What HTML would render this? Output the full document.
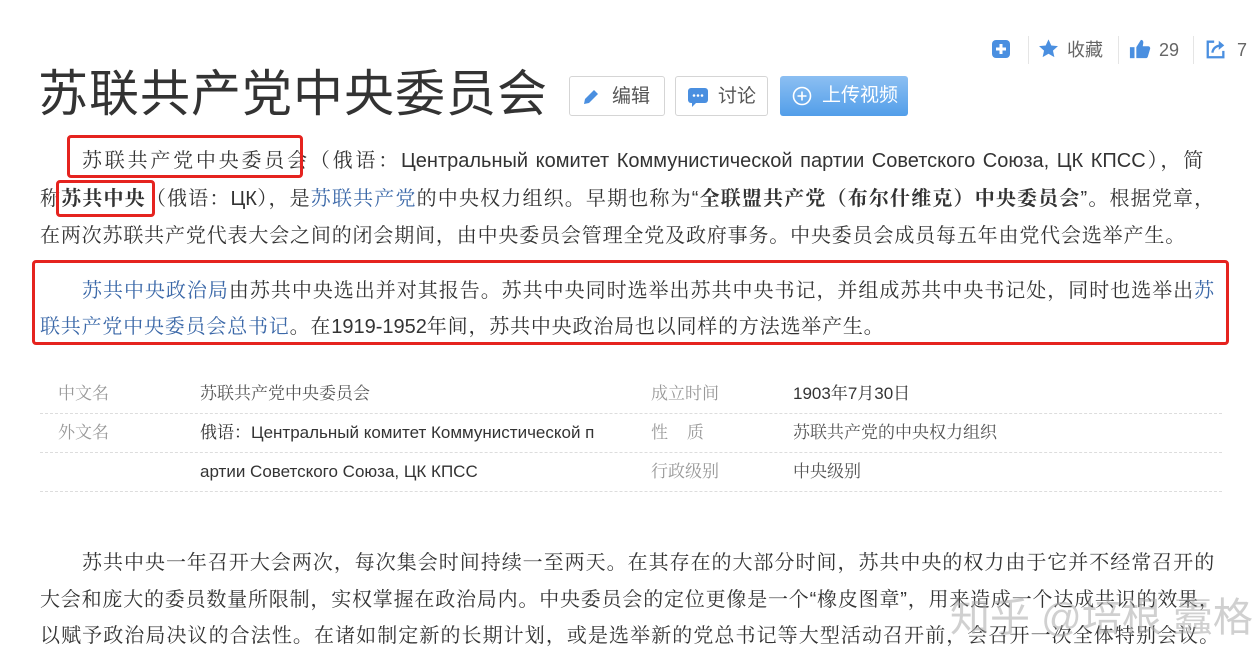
<!DOCTYPE html>
<html><head><meta charset="utf-8"><style>
body{margin:0;width:1257px;height:666px;background:#fff;position:relative;overflow:hidden;font-family:"Liberation Sans","Noto Serif CJK SC",serif;color:#333}
.a{position:absolute;white-space:nowrap}
.ln{position:absolute;font-size:20px;letter-spacing:0.8px;line-height:24px;text-align:justify;text-align-last:justify;white-space:nowrap;font-family:"Liberation Sans","Noto Serif CJK SC","Noto Serif CJK JP",serif;color:#333}
.ru{letter-spacing:0}
.lk{color:#3b68a8}
.btn{position:absolute;top:76px;height:40px;border:1px solid #d5d5d5;border-radius:3px;background:#fff;font-family:"Liberation Sans","Noto Sans CJK SC",sans-serif;font-size:19px;color:#555;line-height:40px;box-sizing:border-box}
.red{position:absolute;border:3px solid #e5231f;border-radius:4px}
.lab{position:absolute;font-size:17px;color:#999;font-family:"Liberation Sans","Noto Serif CJK SC",serif;line-height:22px}
.val{position:absolute;font-size:17px;color:#333;line-height:22px;white-space:nowrap}
.dot{position:absolute;left:40px;width:1182px;border-top:1px dashed #ddd}
.sep{position:absolute;top:36px;width:1px;height:28px;background:#e5e5e5}
.tr{position:absolute;font-family:"Liberation Sans","Noto Sans CJK SC",sans-serif;font-size:18px;color:#666;top:38px;line-height:24px}
</style></head><body>

<svg class="a" style="left:991px;top:39px" width="20" height="20" viewBox="0 0 20 20"><rect x="1" y="1" width="18" height="18" rx="4" fill="#4a8fe0"/><path d="M10 5v10M5 10h10" stroke="#fff" stroke-width="3"/></svg>
<div class="sep" style="left:1028px"></div>
<svg class="a" style="left:1038px;top:38px" width="21" height="21" viewBox="0 0 24 24"><path d="M12 1.5l3.2 7 7.6.8-5.7 5.1 1.6 7.5L12 18l-6.7 3.9 1.6-7.5L1.2 9.3l7.6-.8z" fill="#4a8fe0"/></svg>
<div class="tr" style="left:1067px">收藏</div>
<div class="sep" style="left:1118px"></div>
<svg class="a" style="left:1129px;top:38px" width="22" height="22" viewBox="0 0 24 24"><rect x="1" y="10" width="5" height="12" fill="#4a8fe0"/><path d="M8 10l5-8c2 0 3 1.5 2.5 4L15 9h6c1.5 0 2.5 1.5 2 3l-2.5 8.5c-.4 1.2-1.2 1.5-2.5 1.5H8z" fill="#4a8fe0"/></svg>
<div class="tr" style="left:1159px">29</div>
<div class="sep" style="left:1193px"></div>
<svg class="a" style="left:1205px;top:38px" width="22" height="22" viewBox="0 0 24 24"><path d="M10 4H3v17h17v-7" fill="none" stroke="#4a8fe0" stroke-width="2.5"/><path d="M8 16c1-6 5-8 11-8" fill="none" stroke="#4a8fe0" stroke-width="2.5"/><path d="M15 3l6 5-6 5z" fill="#4a8fe0"/></svg>
<div class="tr" style="left:1237px">7</div>

<div class="a" style="left:38px;top:62px;font-size:50px;line-height:64px;color:#333;font-family:'Liberation Sans','Noto Sans CJK SC',sans-serif;letter-spacing:1px">苏联共产党中央委员会</div>
<div class="btn" style="left:569px;width:96px"><svg class="a" style="left:12px;top:11px" width="18" height="18" viewBox="0 0 18 18"><path d="M2 16l1-5 9-9 4 4-9 9z" fill="#4a8fe0"/></svg><span class="a" style="left:42px">编辑</span></div>
<div class="btn" style="left:675px;width:93px"><svg class="a" style="left:12px;top:11px" width="20" height="19" viewBox="0 0 20 19"><rect x="0" y="0" width="20" height="15" rx="3" fill="#4a8fe0"/><path d="M4 14v5l5-5z" fill="#4a8fe0"/><circle cx="6" cy="7.5" r="1.3" fill="#fff"/><circle cx="10" cy="7.5" r="1.3" fill="#fff"/><circle cx="14" cy="7.5" r="1.3" fill="#fff"/></svg><span class="a" style="left:42px">讨论</span></div>
<div class="btn" style="left:780px;width:128px;border:none;background:linear-gradient(#8cbff2,#529ee9);color:#fff"><svg class="a" style="left:12px;top:10px" width="20" height="20" viewBox="0 0 20 20"><circle cx="10" cy="10" r="8.5" fill="none" stroke="#fff" stroke-width="1.6"/><path d="M10 5.5v9M5.5 10h9" stroke="#fff" stroke-width="1.6"/></svg><span class="a" style="left:42px">上传视频</span></div>

<div class="ln" style="left:82px;top:149px;width:1122px">苏联共产党中央委员会（俄语：<span class="ru">Центральный комитет Коммунистической партии Советского Союза, ЦК КПСС</span>），简</div>
<div class="ln" style="left:40px;top:187px;width:1175px">称<b>苏共中央</b>（俄语：<span class="ru">ЦК</span>），是<span class="lk">苏联共产党</span>的中央权力组织。早期也称为“<b>全联盟共产党（布尔什维克）中央委员会</b>”。根据党章，</div>
<div class="ln" style="left:40px;top:224px;width:1146px">在两次苏联共产党代表大会之间的闭会期间，由中央委员会管理全党及政府事务。中央委员会成员每五年由党代会选举产生。</div>
<div class="red" style="left:67px;top:135px;width:230px;height:37px"></div>
<div class="red" style="left:56px;top:180px;width:93px;height:31px"></div>

<div class="ln" style="left:82px;top:279px;width:1133px"><span class="lk">苏共中央政治局</span>由苏共中央选出并对其报告。苏共中央同时选举出苏共中央书记，并组成苏共中央书记处，同时也选举出<span class="lk">苏</span></div>
<div class="ln" style="left:40px;top:315px;text-align-last:left"><span class="lk">联共产党中央委员会总书记</span>。在<span class="ru">1919-1952</span>年间，苏共中央政治局也以同样的方法选举产生。</div>
<div class="red" style="left:32px;top:260px;width:1191px;height:79px"></div>

<div class="lab" style="left:58px;top:383px">中文名</div>
<div class="val" style="left:200px;top:383px;color:#555">苏联共产党中央委员会</div>
<div class="lab" style="left:651px;top:383px">成立时间</div>
<div class="val" style="left:793px;top:383px">1903年7月30日</div>
<div class="dot" style="top:413px"></div>
<div class="lab" style="left:58px;top:422px">外文名</div>
<div class="val" style="left:200px;top:422px">俄语：Центральный комитет Коммунистической п</div>
<div class="lab" style="left:651px;top:422px">性&nbsp;&nbsp;&nbsp;&nbsp;质</div>
<div class="val" style="left:793px;top:422px;color:#555">苏联共产党的中央权力组织</div>
<div class="dot" style="top:452px"></div>
<div class="val" style="left:200px;top:461px">артии Советского Союза, ЦК КПСС</div>
<div class="lab" style="left:651px;top:461px">行政级别</div>
<div class="val" style="left:793px;top:461px;color:#555">中央级别</div>
<div class="dot" style="top:491px"></div>

<div class="ln" style="left:82px;top:551px;width:1133px">苏共中央一年召开大会两次，每次集会时间持续一至两天。在其存在的大部分时间，苏共中央的权力由于它并不经常召开的</div>
<div class="ln" style="left:40px;top:588px;width:1175px">大会和庞大的委员数量所限制，实权掌握在政治局内。中央委员会的定位更像是一个“橡皮图章”，用来造成一个达成共识的效果，</div>
<div class="ln" style="left:40px;top:624px;width:1180px">以赋予政治局决议的合法性。在诸如制定新的长期计划，或是选举新的党总书记等大型活动召开前，会召开一次全体特别会议。</div>

<div class="a" style="left:950px;top:585px;font-size:40px;color:rgba(170,170,170,0.55);font-family:'Liberation Sans','Noto Sans CJK SC',sans-serif">知乎 @培根 蠹格</div>
</body></html>
